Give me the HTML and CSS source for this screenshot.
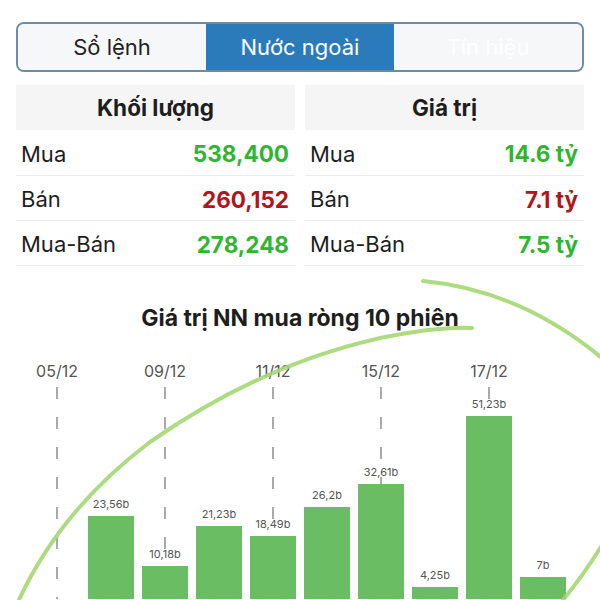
FILE: index.html
```html
<!DOCTYPE html>
<html lang="vi">
<head>
  <meta charset="UTF-8">
  <meta name="viewport" content="width=device-width, initial-scale=1.0">
  <title>Nước ngoài</title>
  <link rel="stylesheet" href="styles.css">
</head>
<body>
  <div class="page">
    <div class="tabs">
      <div class="tab">Sổ lệnh</div>
      <div class="tab active">Nước ngoài</div>
      <div class="tab faded">Tín hiệu</div>
    </div>

    <div class="stats">
      <div class="panel">
        <div class="panel-head">Khối lượng</div>
        <div class="row"><span>Mua</span><b class="up">538,400</b></div>
        <div class="row"><span>Bán</span><b class="down">260,152</b></div>
        <div class="row"><span>Mua-Bán</span><b class="up">278,248</b></div>
      </div>
      <div class="panel">
        <div class="panel-head">Giá trị</div>
        <div class="row"><span>Mua</span><b class="up">14.6 tỷ</b></div>
        <div class="row"><span>Bán</span><b class="down">7.1 tỷ</b></div>
        <div class="row"><span>Mua-Bán</span><b class="up">7.5 tỷ</b></div>
      </div>
    </div>

    <h2 class="chart-title">Giá trị NN mua ròng 10 phiên</h2>

    <!-- one column per session, date + grid line every second one -->
    <div class="chart">
      <div class="col"><div class="date">05/12</div><div class="grid"></div><div class="plot"></div></div>
      <div class="col"><div class="date"></div><div class="plot"><span class="val">23,56b</span><div class="bar" style="height: 83px"></div></div></div>
      <div class="col"><div class="date">09/12</div><div class="grid"></div><div class="plot"><span class="val">10,18b</span><div class="bar" style="height: 33px"></div></div></div>
      <div class="col"><div class="date"></div><div class="plot"><span class="val">21,23b</span><div class="bar" style="height: 73px"></div></div></div>
      <div class="col"><div class="date">11/12</div><div class="grid"></div><div class="plot"><span class="val">18,49b</span><div class="bar" style="height: 63px"></div></div></div>
      <div class="col"><div class="date"></div><div class="plot"><span class="val">26,2b</span><div class="bar" style="height: 92px"></div></div></div>
      <div class="col"><div class="date">15/12</div><div class="grid"></div><div class="plot"><span class="val">32,61b</span><div class="bar" style="height: 115px"></div></div></div>
      <div class="col"><div class="date"></div><div class="plot"><span class="val">4,25b</span><div class="bar" style="height: 12px"></div></div></div>
      <div class="col"><div class="date">17/12</div><div class="grid"></div><div class="plot"><span class="val">51,23b</span><div class="bar" style="height: 183px"></div></div></div>
      <div class="col"><div class="date"></div><div class="plot"><span class="val">7b</span><div class="bar" style="height: 22px"></div></div></div>
    </div>
  </div>

  <!-- marker scribble drawn over the screenshot -->
  <svg class="scribble" width="600" height="600" viewBox="0 0 600 600">
    <path d="M18,602 Q60,510 150,442 Q260,365 380,338 Q440,326 472,328" />
    <path d="M423,281 Q520,290 602,358" />
    <path d="M563,600 Q585,573 602,545" />
  </svg>
</body>
</html>
```

FILE: styles.css
```css
body {
    margin: 0;
    padding: 0;
    background-color: #fff;
    font-family: Inter, "Noto Sans", sans-serif;
    color: #1e1e1e;
    position: relative;
}

.page {
    padding: 22px 16px 0;
    height: 578px;
    overflow: hidden;
}

.tabs {
    display: flex;
    height: 50px;
    border: 2px solid #6a8ca9;
    border-radius: 8px;
    box-sizing: border-box;
    overflow: hidden;
}

.tab {
    flex: 1;
    display: flex;
    align-items: center;
    justify-content: center;
    background-color: #f6f7f9;
    font-size: 22px;
    color: #222;
}

.tab.active {
    background-color: #2b7bba;
    color: #fff;
}

.tab.faded {
    color: #fff;
}

.stats {
    display: grid;
    grid-template-columns: 1fr 1fr;
    gap: 10px;
    margin-top: 13px;
}

.panel-head {
    height: 45px;
    display: flex;
    align-items: center;
    justify-content: center;
    background-color: #f5f5f5;
    font-size: 22.5px;
    font-weight: 700;
}

.row {
    height: 45px;
    display: flex;
    align-items: center;
    justify-content: space-between;
    padding: 2px 6px 0 5px;
    border-bottom: 1px solid #ececec;
    box-sizing: border-box;
    font-size: 22px;
}

.row:nth-child(2) {
    height: 46px;
}

.row b {
    font-size: 22.5px;
    font-weight: 700;
}

.up {
    color: #2fb52f;
}

.down {
    color: #b3141b;
}

.chart-title {
    margin: 39px 0 0;
    height: 26px;
    line-height: 26px;
    text-align: center;
    font-size: 23px;
    font-weight: 700;
}

.chart {
    display: flex;
    margin-top: 30px;
    padding-left: 14px;
    height: 238px;
}

.col {
    width: 54px;
    display: flex;
    flex-direction: column;
    align-items: center;
    position: relative;
}

.date {
    height: 20px;
    line-height: 20px;
    font-size: 16px;
    color: #555;
}

.grid {
    position: absolute;
    top: 26px;
    bottom: 0;
    left: 26px;
    width: 2px;
    background: repeating-linear-gradient(#a9a9a9 0 12px, transparent 12px 30px);
}

.plot {
    flex: 1;
    width: 100%;
    display: flex;
    flex-direction: column;
    align-items: center;
    justify-content: flex-end;
    position: relative;
}

.val {
    font-size: 11px;
    line-height: 14px;
    margin-bottom: 5px;
    color: #555;
}

.bar {
    width: 46px;
    background-color: #6bbd63;
}

.scribble {
    position: absolute;
    top: 0;
    left: 0;
    pointer-events: none;
}

.scribble path {
    fill: none;
    stroke: #a3d772;
    stroke-width: 4;
    stroke-linecap: round;
    opacity: 0.9;
}
```
